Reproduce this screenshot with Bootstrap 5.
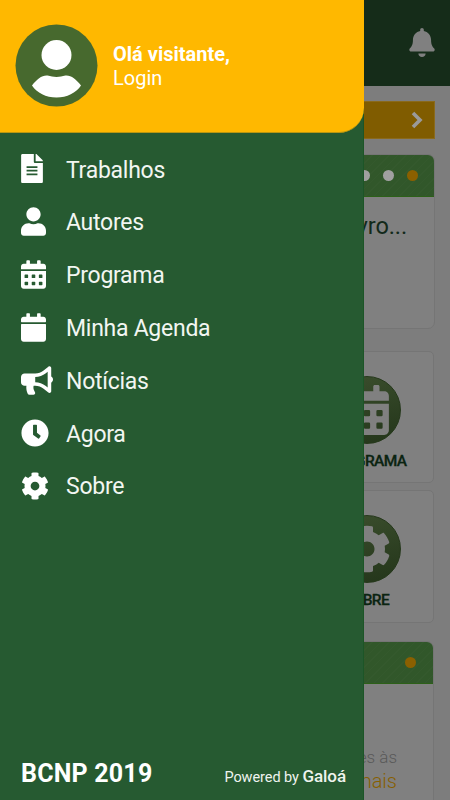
<!DOCTYPE html>
<html lang="pt-BR">
<head>
<meta charset="utf-8">
<meta name="viewport" content="width=device-width, initial-scale=1">
<title>BCNP 2019</title>
<link href="https://cdn.jsdelivr.net/npm/bootstrap@5.3.0/dist/css/bootstrap.min.css" rel="stylesheet">
<style>
body{font-family:Roboto,"Liberation Sans",sans-serif;background:#7d7d7d;width:450px;height:800px;overflow:hidden}
svg{display:block;fill:currentColor;flex:none}
.screen{height:800px;overflow:hidden}
.topbar{height:86px;background:#152c19;color:#808080;padding:0 15px 2px 0}
.feed{padding:15px 16px 0}
.notice{height:38px;background:#805c00;border:1px solid #8a6a1c;color:#9a9a9a;padding-right:11px;margin-right:-1px}
.panel{background:#808080;border:1px solid #757575;border-radius:7px;overflow:hidden}
.panel-top{height:42px;gap:12.6px;background:repeating-linear-gradient(135deg,#31572a 0 5px,#34592d 5px 6px);border-bottom:1px solid #2c6018;padding-right:16px}
.panel-a{height:175px;margin-top:15px;margin-right:-1px}
.panel-b{height:190px;margin-top:18.5px;border-radius:7px 7px 0 0}
.panel-b .panel-top{padding-right:17px}
.dot{width:11.4px;height:11.4px;border-radius:50%;background:#a0a0a0}
.dot-on{background:#8b6000}
.headline{font-size:23.5px;line-height:28px;color:#12291a;padding:15px 27px 0 0;letter-spacing:-.1px}
.tiles{margin-top:21.5px;gap:7px}
.tile{width:135px;height:132.5px;background:#808080;border:1px solid #757575;border-radius:5px;padding-top:24px}
.tile-disc{width:68px;height:68px;border-radius:50%;color:#808080;background:linear-gradient(165deg,#3b4e2d,#23351a);border:1px solid #25381b}
.tile-name{font-size:15.5px;line-height:18px;font-weight:500;color:#0b2411;margin-top:8px;letter-spacing:-.6px;-webkit-text-stroke:.3px}
.note{font-size:17px;line-height:24px;color:#595959;padding:60.5px 36px 0 0;font-weight:300}
.note-strong{font-size:20px;color:#875f00}
.drawer{width:364px;height:800px;background:#265a31;color:#fff;z-index:5;border-right:1px solid #1c5527}
.drawer-head{height:133px;background:#ffb800;border-radius:0 0 25px 0;border-bottom:1px solid #b99612;padding:0 0 1px 15px;gap:15px;margin-right:-1px}
.greet{font-size:20px;line-height:24px}
.menu{padding:9.5px 0 0 21px}
.menu-row{height:52.8px;color:#fff;font-size:23px}
.menu-ico{width:45px}
.menu-label{color:#f2f6f2;padding-top:4px;letter-spacing:-.27px}
.drawer-foot{padding:0 17px 9px 21px}
.brand{font-size:25px;line-height:34px;font-weight:700;letter-spacing:.2px}
.powered{font-size:14.5px;color:#eef3ee;line-height:26px;letter-spacing:-.06px}
.maker{font-size:17px;font-weight:500}
</style>
</head>
<body>
<svg width="0" height="0" class="position-absolute" aria-hidden="true">
<symbol id="file" viewBox="0 0 384 512"><path fill-rule="evenodd" d="M224 136V0H24C10.700 0 0 10.700 0 24v464c0 13.300 10.700 24 24 24h336c13.300 0 24-10.700 24-24V160H248c-13.200 0-24-10.800-24-24zM96 216H288V246H96zM96 280H288V310H96zM96 344H288V374H96zM384 121.900v6.100H256V0h6.100c6.400 0 12.500 2.500 17 7l97.900 98c4.500 4.500 7 10.600 7 16.900z"/></symbol>
<symbol id="user" viewBox="0 0 448 512"><path d="M224 256c70.700 0 128-57.300 128-128S294.700 0 224 0 96 57.300 96 128s57.300 128 128 128zm89.600 32h-16.700c-22.200 10.200-46.900 16-72.900 16s-50.600-5.800-72.900-16h-16.700C60.200 288 0 348.200 0 422.400V464c0 26.500 21.500 48 48 48h352c26.500 0 48-21.500 48-48v-41.600c0-74.200-60.200-134.400-134.400-134.400z"/></symbol>
<symbol id="cal" viewBox="0 0 448 512"><path d="M12 192h424c6.600 0 12 5.400 12 12v260c0 26.500-21.500 48-48 48H48c-26.500 0-48-21.500-48-48V204c0-6.600 5.400-12 12-12zm436-44v-36c0-26.500-21.500-48-48-48h-48V12c0-6.600-5.400-12-12-12h-40c-6.600 0-12 5.400-12 12v52H160V12c0-6.600-5.400-12-12-12h-40c-6.600 0-12 5.400-12 12v52H48C21.500 64 0 85.500 0 112v36c0 6.600 5.400 12 12 12h424c6.600 0 12-5.400 12-12z"/></symbol>
<symbol id="caldays" viewBox="0 0 448 512"><path fill-rule="evenodd" d="M0 464c0 26.500 21.500 48 48 48h352c26.500 0 48-21.500 48-48V192H0zM64 268q0-12 12-12h40q12 0 12 12v40q0 12-12 12H76q-12 0-12-12zM192 268q0-12 12-12h40q12 0 12 12v40q0 12-12 12h-40q-12 0-12-12zM320 268q0-12 12-12h40q12 0 12 12v40q0 12-12 12h-40q-12 0-12-12zM64 396q0-12 12-12h40q12 0 12 12v40q0 12-12 12H76q-12 0-12-12zM192 396q0-12 12-12h40q12 0 12 12v40q0 12-12 12h-40q-12 0-12-12zM320 396q0-12 12-12h40q12 0 12 12v40q0 12-12 12h-40q-12 0-12-12zM400 64h-48V16c0-8.800-7.200-16-16-16h-32c-8.800 0-16 7.200-16 16v48H160V16c0-8.800-7.200-16-16-16h-32c-8.800 0-16 7.200-16 16v48H48C21.500 64 0 85.500 0 112v48h448v-48c0-26.500-21.500-48-48-48z"/></symbol>
<symbol id="horn" viewBox="0 0 576 512"><path d="M576 240c0-23.630-12.950-44.040-32-55.120V32.010C544 23.260 537.020 0 512 0c-7.120 0-14.190 2.380-19.980 7.020l-85.030 68.030C364.280 109.190 310.660 128 256 128H64c-35.350 0-64 28.650-64 64v96c0 35.350 28.650 64 64 64h33.700c-1.390 10.480-2.180 21.140-2.180 32 0 39.770 9.260 77.350 25.560 110.940 5.190 10.690 16.520 17.060 28.400 17.060h74.280c26.050 0 41.690-29.840 25.900-50.560-16.400-21.520-26.150-48.360-26.150-77.440 0-11.110 1.620-21.790 4.410-32H256c54.660 0 108.280 18.810 150.980 52.950l85.030 68.030a32.023 32.023 0 0 0 19.980 7.020c24.920 0 32-22.780 32-32V295.130C563.050 284.040 576 263.630 576 240zm-96 141.420l-33.050-26.440C392.950 311.780 325.120 288 256 288v-96c69.120 0 136.950-23.780 190.950-66.980L480 98.580v282.840z"/></symbol>
<symbol id="clock" viewBox="0 0 512 512"><path d="M256 8C119 8 8 119 8 256s111 248 248 248 248-111 248-248S393 8 256 8zm57.100 350.100L224.900 294c-3.100-2.300-4.900-5.900-4.900-9.700V116c0-6.600 5.400-12 12-12h48c6.600 0 12 5.400 12 12v137.700l63.500 46.200c5.400 3.900 6.500 11.400 2.600 16.800l-28.200 38.800c-3.900 5.300-11.400 6.500-16.800 2.600z"/></symbol>
<symbol id="cog" viewBox="0 0 512 512"><path d="M487.400 315.700l-42.600-24.600c4.300-23.200 4.300-47 0-70.200l42.600-24.600c4.900-2.800 7.100-8.600 5.500-14-11.100-35.600-30-67.800-54.700-94.600-3.800-4.100-10-5.100-14.800-2.300L380.800 110c-17.900-15.400-38.500-27.300-60.800-35.100V25.800c0-5.600-3.900-10.500-9.400-11.700-36.700-8.200-74.300-7.800-109.200 0-5.500 1.200-9.400 6.100-9.400 11.700V75c-22.200 7.900-42.800 19.800-60.800 35.100L88.700 85.500c-4.900-2.800-11-1.900-14.800 2.300-24.700 26.700-43.600 58.900-54.700 94.600-1.700 5.400.6 11.200 5.500 14L67.300 221c-4.300 23.200-4.300 47 0 70.200l-42.600 24.600c-4.900 2.800-7.100 8.600-5.500 14 11.100 35.600 30 67.800 54.700 94.600 3.800 4.100 10 5.100 14.800 2.300l42.600-24.600c17.900 15.400 38.500 27.300 60.800 35.100v49.200c0 5.600 3.900 10.500 9.400 11.700 36.700 8.200 74.300 7.800 109.200 0 5.500-1.200 9.400-6.100 9.400-11.700v-49.200c22.200-7.900 42.800-19.800 60.800-35.100l42.600 24.600c4.900 2.800 11 1.900 14.800-2.300 24.700-26.700 43.600-58.900 54.700-94.600 1.500-5.500-.7-11.300-5.600-14.100zM256 336c-44.100 0-80-35.900-80-80s35.900-80 80-80 80 35.900 80 80-35.900 80-80 80z"/></symbol>
<symbol id="bell" viewBox="0 0 448 512"><path d="M224 512c35.320 0 63.970-28.650 63.970-64H160.030c0 35.350 28.650 64 63.970 64zm215.390-149.710c-19.320-20.760-55.470-51.990-55.470-154.290 0-77.700-54.480-139.900-127.940-155.160V32c0-17.670-14.320-32-31.980-32s-31.980 14.330-31.980 32v20.840C118.560 68.100 64.080 130.300 64.080 208c0 102.300-36.150 133.530-55.470 154.290-6 6.450-8.660 14.160-8.610 21.710.11 16.400 12.980 32 32.100 32h383.800c19.120 0 32-15.600 32.100-32 .05-7.550-2.610-15.270-8.610-21.710z"/></symbol>
</svg>

<div class="screen position-relative">
  <header class="topbar d-flex align-items-center justify-content-end"><svg width="26" height="29"><use href="#bell"/></svg></header>
  <main class="feed">
    <div class="notice d-flex align-items-center justify-content-end"><svg width="12" height="18" viewBox="0 0 12 18"><path d="M2 2l7 7-7 7" fill="none" stroke="currentColor" stroke-width="3.600"/></svg></div>
    <section class="panel panel-a">
      <div class="panel-top d-flex align-items-center justify-content-end"><i class="dot"></i><i class="dot"></i><i class="dot dot-on"></i></div>
      <div class="headline text-end">Livro...</div>
    </section>
    <div class="tiles d-flex flex-column align-items-end">
      <div class="tile d-flex flex-column align-items-center">
        <div class="tile-disc d-flex align-items-center justify-content-center"><svg width="44" height="50"><use href="#caldays"/></svg></div>
        <div class="tile-name">PROGRAMA</div>
      </div>
      <div class="tile d-flex flex-column align-items-center">
        <div class="tile-disc d-flex align-items-center justify-content-center"><svg width="48" height="48"><use href="#cog"/></svg></div>
        <div class="tile-name">SOBRE</div>
      </div>
    </div>
    <section class="panel panel-b">
      <div class="panel-top d-flex align-items-center justify-content-end"><i class="dot dot-on"></i></div>
      <div class="note text-end">es às<div class="note-strong">mais</div></div>
    </section>
  </main>

  <aside class="drawer position-absolute top-0 start-0 d-flex flex-column">
    <div class="drawer-head d-flex align-items-center">
      <svg width="83" height="83" viewBox="0 0 83 83"><circle cx="41.500" cy="41.500" r="41" fill="#47692e"/><circle cx="41.500" cy="31" r="15" fill="#fff"/><path d="M17 61.500C22 55 27 51 32.500 51.500C36 52 38 53 41.500 53S47 52 50.500 51.500C56 51 61 55 66 61.500C61 69 52 73.500 41.500 73.500S22 69 17 61.500z" fill="#fff"/></svg>
      <div class="greet"><div class="fw-bold">Olá visitante,</div><div>Login</div></div>
    </div>
    <nav class="menu flex-grow-1">
      <a class="menu-row d-flex align-items-center text-decoration-none"><span class="menu-ico"><svg width="22" height="29"><use href="#file"/></svg></span><span class="menu-label">Trabalhos</span></a>
      <a class="menu-row d-flex align-items-center text-decoration-none"><span class="menu-ico"><svg width="25" height="29"><use href="#user"/></svg></span><span class="menu-label">Autores</span></a>
      <a class="menu-row d-flex align-items-center text-decoration-none"><span class="menu-ico"><svg width="25" height="29"><use href="#caldays"/></svg></span><span class="menu-label">Programa</span></a>
      <a class="menu-row d-flex align-items-center text-decoration-none"><span class="menu-ico"><svg width="25" height="29"><use href="#cal"/></svg></span><span class="menu-label">Minha Agenda</span></a>
      <a class="menu-row d-flex align-items-center text-decoration-none"><span class="menu-ico"><svg width="32" height="29"><use href="#horn"/></svg></span><span class="menu-label">Notícias</span></a>
      <a class="menu-row d-flex align-items-center text-decoration-none"><span class="menu-ico"><svg width="28" height="28"><use href="#clock"/></svg></span><span class="menu-label">Agora</span></a>
      <a class="menu-row d-flex align-items-center text-decoration-none"><span class="menu-ico"><svg width="28" height="28"><use href="#cog"/></svg></span><span class="menu-label">Sobre</span></a>
    </nav>
    <footer class="drawer-foot d-flex align-items-end justify-content-between">
      <div class="brand">BCNP 2019</div>
      <div class="powered">Powered by <span class="maker">Galoá</span></div>
    </footer>
  </aside>
</div>
<script src="https://cdn.jsdelivr.net/npm/bootstrap@5.3.0/dist/js/bootstrap.bundle.min.js"></script>
</body>
</html>
